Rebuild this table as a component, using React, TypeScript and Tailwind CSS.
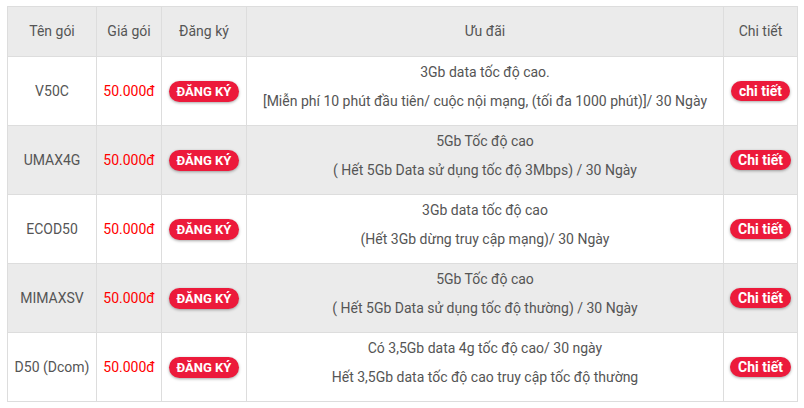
const rows = [
  { name: "V50C", lines: ["3Gb data tốc độ cao.", "[Miễn phí 10 phút đầu tiên/ cuộc nội mạng, (tối đa 1000 phút)]/ 30 Ngày"], detail: "chi tiết" },
  { name: "UMAX4G", lines: ["5Gb Tốc độ cao", "( Hết 5Gb Data sử dụng tốc độ 3Mbps) / 30 Ngày"], detail: "Chi tiết" },
  { name: "ECOD50", lines: ["3Gb data tốc độ cao", "(Hết 3Gb dừng truy cập mạng)/ 30 Ngày"], detail: "Chi tiết" },
  { name: "MIMAXSV", lines: ["5Gb Tốc độ cao", "( Hết 5Gb Data sử dụng tốc độ thường) / 30 Ngày"], detail: "Chi tiết" },
  { name: "D50 (Dcom)", lines: ["Có 3,5Gb data 4g tốc độ cao/ 30 ngày", "Hết 3,5Gb data tốc độ cao truy cập tốc độ thường"], detail: "Chi tiết" },
];

export default function App() {
  return (
    <div className="w-[804px] h-[408px] bg-white pt-[6px] pl-[7px] font-['Roboto',sans-serif] text-[14px] text-[#555]">
      <table className="border-collapse table-fixed w-[790px]">
        <colgroup>
          <col className="w-[89px]" />
          <col className="w-[65px]" />
          <col className="w-[85px]" />
          <col className="w-[477px]" />
          <col className="w-[74px]" />
        </colgroup>
        <thead>
          <tr className="bg-[#ebebeb] h-[50px]">
            <th className="border border-[#dddddd] font-normal">Tên gói</th>
            <th className="border border-[#dddddd] font-normal">Giá gói</th>
            <th className="border border-[#dddddd] font-normal">Đăng ký</th>
            <th className="border border-[#dddddd] font-normal">Ưu đãi</th>
            <th className="border border-[#dddddd] font-normal">Chi tiết</th>
          </tr>
        </thead>
        <tbody>
          {rows.map((r, i) => (
            <tr key={r.name} className={`h-[69px] ${i % 2 === 1 ? "bg-[#ebebeb]" : "bg-white"}`}>
              <td className="border border-[#dddddd] text-center">{r.name}</td>
              <td className="border border-[#dddddd] text-center text-[#ff0000]">50.000đ</td>
              <td className="border border-[#dddddd] text-center">
                <span className="inline-block bg-[#ec1a3b] text-white font-bold text-[13px] leading-[21px] px-[8px] rounded-full shadow-[0_1px_3px_rgba(0,0,0,0.35)]">
                  ĐĂNG KÝ
                </span>
              </td>
              <td className="border border-[#dddddd] text-center leading-[29px] pb-[8px]">
                {r.lines.map((l) => (
                  <div key={l}>{l}</div>
                ))}
              </td>
              <td className="border border-[#dddddd] text-center">
                <span className="inline-block bg-[#ec1a3b] text-white font-bold text-[14px] leading-[20px] px-[8px] rounded-full shadow-[0_1px_3px_rgba(0,0,0,0.35)]">
                  {r.detail}
                </span>
              </td>
            </tr>
          ))}
        </tbody>
      </table>
    </div>
  );
}
